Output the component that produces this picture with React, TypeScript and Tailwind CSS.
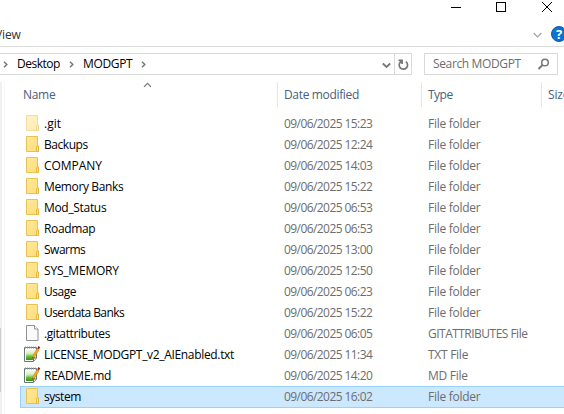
import React from "react";

type Kind = "hidden" | "folder" | "blank" | "note";
type Entry = { name: string; date: string; type: string; kind: Kind; fit: string; typeFit?: string; selected?: boolean };

const entries: Entry[] = [
  { name: ".git", date: "09/06/2025 15:23", type: "File folder", kind: "hidden", fit: "tracking-[0px]" },
  { name: "Backups", date: "09/06/2025 12:24", type: "File folder", kind: "folder", fit: "tracking-[-0.45px]" },
  { name: "COMPANY", date: "09/06/2025 14:03", type: "File folder", kind: "folder", fit: "tracking-[-0.05px]" },
  { name: "Memory Banks", date: "09/06/2025 15:22", type: "File folder", kind: "folder", fit: "tracking-[-0.37px]" },
  { name: "Mod_Status", date: "09/06/2025 06:53", type: "File folder", kind: "folder", fit: "tracking-[-0.32px]" },
  { name: "Roadmap", date: "09/06/2025 06:53", type: "File folder", kind: "folder", fit: "tracking-[-0.36px]" },
  { name: "Swarms", date: "09/06/2025 13:00", type: "File folder", kind: "folder", fit: "tracking-[-0.5px]" },
  { name: "SYS_MEMORY", date: "09/06/2025 12:50", type: "File folder", kind: "folder", fit: "tracking-[-0.2px]" },
  { name: "Usage", date: "09/06/2025 06:23", type: "File folder", kind: "folder", fit: "tracking-[-0.5px]" },
  { name: "Userdata Banks", date: "09/06/2025 15:22", type: "File folder", kind: "folder", fit: "tracking-[-0.56px]" },
  { name: ".gitattributes", date: "09/06/2025 06:05", type: "GITATTRIBUTES File", kind: "blank", fit: "tracking-[-0.4px]", typeFit: "tracking-[-0.52px]" },
  { name: "LICENSE_MODGPT_v2_AIEnabled.txt", date: "09/06/2025 11:34", type: "TXT File", kind: "note", fit: "tracking-[-0.33px]" },
  { name: "README.md", date: "09/06/2025 14:20", type: "MD File", kind: "note", fit: "tracking-[-0.25px]" },
  { name: "system", date: "09/06/2025 16:02", type: "File folder", kind: "folder", fit: "tracking-[-0.45px]", selected: true },
];

function FileIcon({ kind }: { kind: Kind }) {
  if (kind === "note")
    return (
      <svg width="18" height="18" viewBox="0 0 18 18" className="shrink-0">
        <defs>
          <linearGradient id="leaf" x1="0" y1="0" x2="0" y2="1">
            <stop offset="0" stopColor="#f3faec" />
            <stop offset=".35" stopColor="#d3eeb5" />
            <stop offset=".65" stopColor="#6cbf35" />
            <stop offset="1" stopColor="#329012" />
          </linearGradient>
        </defs>
        <path d="M.5 2.500h12v10.500l-3 3.500h-9z" fill="#fff" stroke="#68747c" />
        <path d="M2 5h9v7.500l-2.500 2.500H2z" fill="url(#leaf)" />
        <path d="M1 2.500h11" stroke="#87929a" strokeWidth="2" strokeDasharray="1 1" />
        <path d="M9.500 16v-3h3" fill="#eee" stroke="#65717a" />
        <path d="M8.300 13.300l.8-2.800L13 3.500l2 1.200-4.300 7.300z" fill="#f5ad1d" stroke="#c77a0a" strokeWidth=".6" />
        <path d="M13.300 3.200l1.100-2.100 1.800 1.100-1.200 2.100z" fill="#9c1d1d" />
        <path d="M8.200 13.500l.5-1.600 1 .7z" fill="#333" />
      </svg>
    );
  if (kind === "blank")
    return (
      <svg width="18" height="18" viewBox="0 0 18 18" className="shrink-0">
        <path d="M2.500 1.500h8l3.500 3.500v11.500H2.500z" fill="#fafafa" stroke="#909090" />
        <path d="M10.500 1.500V5H14" fill="#fff" stroke="#909090" />
      </svg>
    );
  return (
    <svg width="18" height="18" viewBox="0 0 18 18" className={`shrink-0 ${kind === "hidden" ? "opacity-55" : ""}`}>
      <defs>
        <linearGradient id="paper" x1="0" y1="0" x2="1" y2="1">
          <stop offset="0" stopColor="#ffe99f" />
          <stop offset="1" stopColor="#ffdc74" />
        </linearGradient>
      </defs>
      <path d="M2.500 1.500h11v9.500h1v5.500h-12z" fill="url(#paper)" stroke="#e9c352" />
      <path d="M12.500 16.500V11.500l.5-.5h1.500v5.500z" fill="#ffe596" stroke="#e5b93d" />
    </svg>
  );
}

function Crumb({ className }: { className: string }) {
  return (
    <svg width="5" height="7" viewBox="0 0 5 7" className={`shrink-0 ${className}`}>
      <path d="M1 .7L3.800 3.500 1 6.300" fill="none" stroke="#777" strokeWidth="1.500" />
    </svg>
  );
}

export default function App() {
  return (
    <div className="flex h-[414px] w-[564px] flex-col overflow-hidden bg-white font-['Open_Sans','Noto_Sans',sans-serif] text-[12px] leading-[20px] whitespace-nowrap text-black">
      <div className="flex h-[23px] shrink-0 justify-end">
        <svg width="120" height="16" viewBox="0 0 120 16" fill="none" stroke="#000" shapeRendering="crispEdges">
          <path d="M7 7.500h10M52.500 2.500h9v9h-9z" />
          <path d="M98 2l10 10M108 2L98 12" shapeRendering="auto" />
        </svg>
      </div>
      <div className="flex h-6 shrink-0 justify-between border-b border-[#d9dadb]">
        <span className="-ml-[5px] mt-[2px] tracking-[-0.1px] text-[#333]">View</span>
        <div className="-mr-[3px] flex">
          <svg width="9" height="6" viewBox="0 0 9 6" className="mt-[9px] mr-[9px]">
            <path d="M.7 1l3.800 3.800L8.300 1" fill="none" stroke="#a0a0a0" strokeWidth="1.200" />
          </svg>
          <div className="mt-[3px] flex size-4 items-center justify-center rounded-full border border-[#17579f] bg-[#0873d2] text-[13px] leading-4 font-bold text-white">?</div>
        </div>
      </div>
      <div className="flex h-[35px] shrink-0 pt-[6px]">
        <div className="flex h-[22px] w-[412px] border border-l-0 border-[#d9d9d9]">
          <Crumb className="mt-[7px] ml-[3px]" />
          <span className="ml-[9px] w-[43px] tracking-[-0.48px]">Desktop</span>
          <Crumb className="mt-[7px] ml-[9px]" />
          <span className="ml-[9px] w-[50px] tracking-[-0.35px]">MODGPT</span>
          <Crumb className="mt-[7px] ml-[8px]" />
          <div className="ml-auto flex w-[13px] items-center border-r border-[#d9d9d9]">
            <svg width="9" height="7" viewBox="0 0 9 7" className="mt-[2px]"><path d="M.8 1.500l3.700 3.500 3.700-3.500" fill="none" stroke="#777" strokeWidth="1.800" /></svg>
          </div>
          <div className="flex w-4 items-center justify-center">
            <svg width="12" height="13" viewBox="0 0 12 13" fill="none" stroke="#777" strokeWidth="1.700">
              <path d="M8.800 3.600A4.200 4.200 0 1 1 4.200 3.400M1.500 2.300h3.600v3.700" />
            </svg>
          </div>
        </div>
        <div className="ml-3 flex h-[22px] w-[134px] border border-[#d9d9d9] text-[#6d6d6d]">
          <span className="ml-[8px] w-[90px] tracking-[-0.36px]">Search MODGPT</span>
          <svg width="13" height="13" viewBox="0 0 13 13" className="mt-[4px] ml-[14px]" fill="none" stroke="#777">
            <circle cx="8" cy="4.500" r="3.300" strokeWidth="1.500" />
            <path d="M5.500 7L1.500 11" strokeWidth="2" />
          </svg>
        </div>
      </div>
      <div className="flex flex-1">
        <div className="flex w-[5px] shrink-0 border-r border-[#f4f4f4]">
          <div className="w-[2px] bg-[#f0f0f0] pt-[246px]"><div className="h-[64px] w-px bg-[#cdcdcd]" /></div>
        </div>
        <div className="flex flex-1 flex-col">
          <div className="flex h-[25px] leading-[26px] text-[#4c607a]">
            <div className="relative w-[273px] border-r border-[#e5e5e5] pl-[18px] tracking-[-0.3px]">
              Name
              <svg width="9" height="6" viewBox="0 0 9 6" className="absolute top-0 left-[138px]"><path d="M1 4.800L4.500 1.300 8 4.800" fill="none" stroke="#777" strokeWidth="1.200" /></svg>
            </div>
            <div className="w-[144px] border-r border-[#e5e5e5] pl-[6px] tracking-[-0.34px]">Date modified</div>
            <div className="w-[120px] border-r border-[#e5e5e5] pl-[6px] tracking-[-0.5px]">Type</div>
            <div className="pl-[6px] tracking-[-0.2px]">Size</div>
          </div>
          <div className="mt-[6px] ml-[15px] flex flex-col">
            {entries.map((e) => (
              <div key={e.name} className={`flex ${e.selected ? "h-[22px] border border-r-0 border-[#99d1ff] bg-[#cce8ff]" : "h-[21px] border-l border-transparent pt-px"}`}>
                <div className="ml-[3px] h-[18px]"><FileIcon kind={e.kind} /></div>
                <span className={`ml-[2px] w-[240px] ${e.fit}`}>{e.name}</span>
                <span className="w-[144px] tracking-[-0.57px] text-[#6d6d6d]">{e.date}</span>
                <span className={`text-[#6d6d6d] ${e.typeFit ?? "tracking-[-0.27px]"}`}>{e.type}</span>
              </div>
            ))}
          </div>
        </div>
      </div>
    </div>
  );
}
